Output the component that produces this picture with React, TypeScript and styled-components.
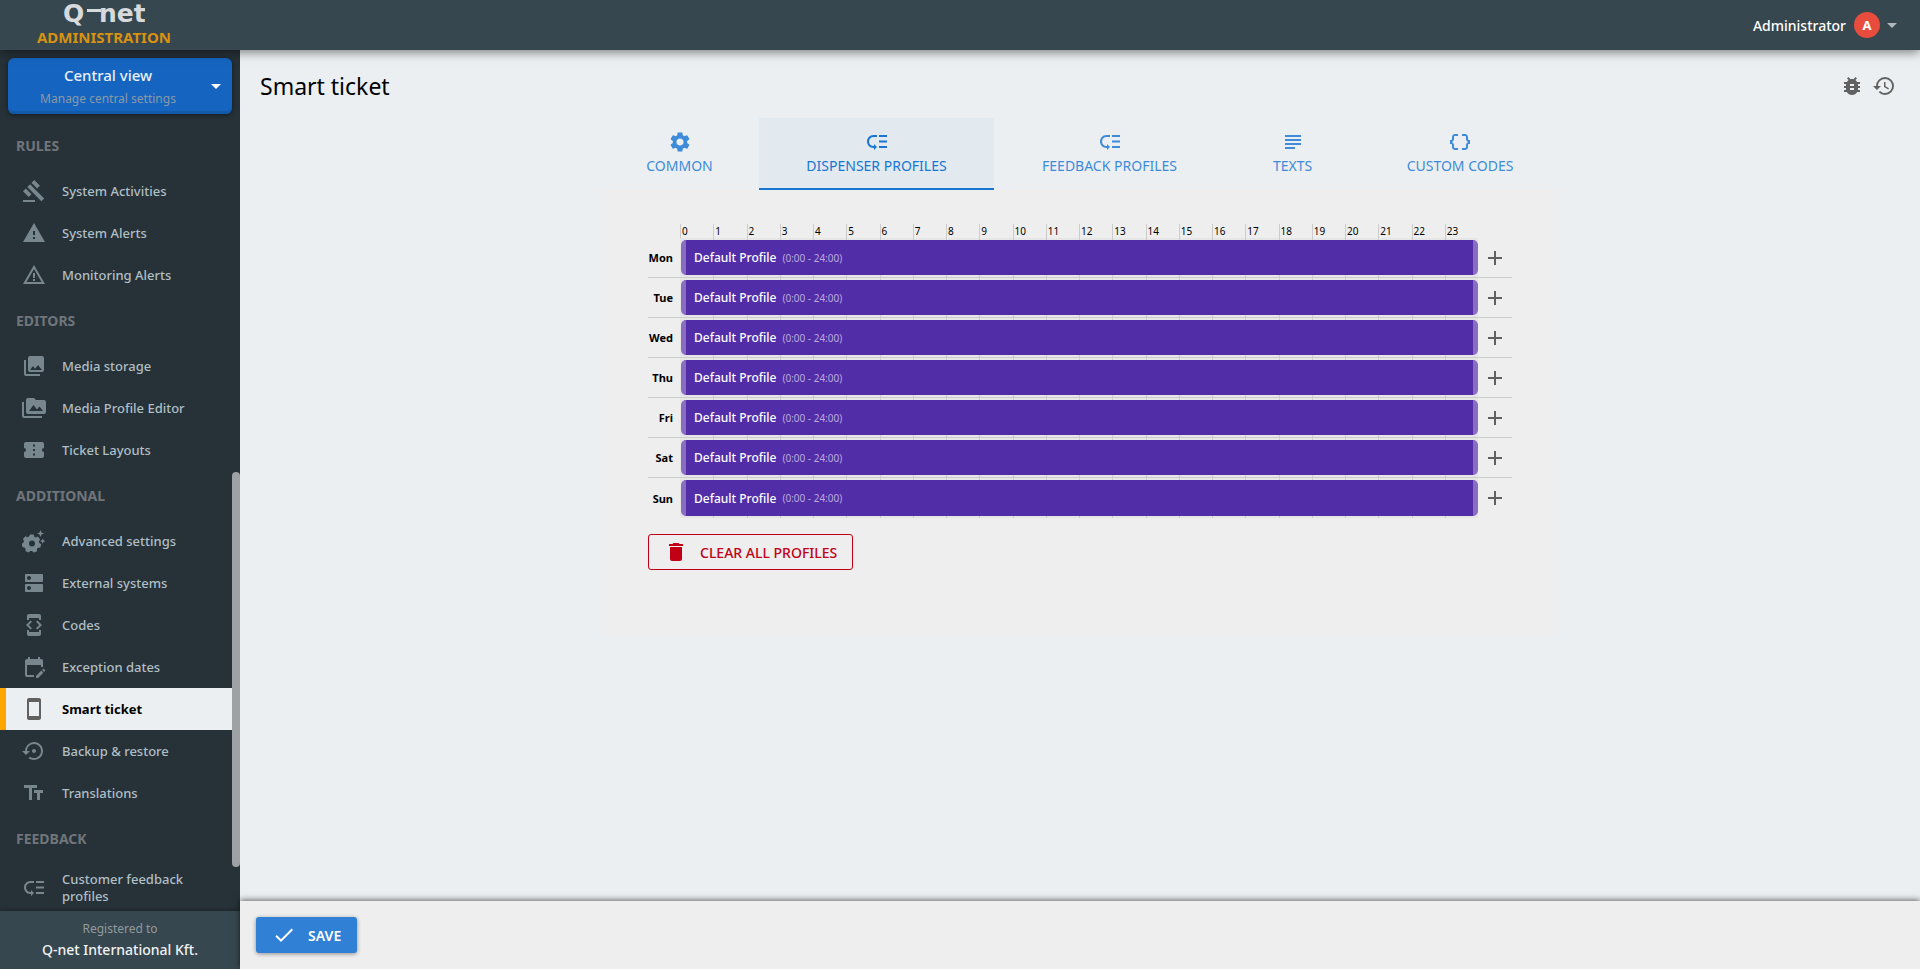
import React from "react";
import styled, { createGlobalStyle, css } from "styled-components";
import type { IconType } from "react-icons";
import {
  MdAdd,
  MdArrowDropDown,
  MdBugReport,
  MdCheck,
  MdConfirmationNumber,
  MdDataObject,
  MdDelete,
  MdDeveloperMode,
  MdDns,
  MdEditCalendar,
  MdGavel,
  MdHistory,
  MdLowPriority,
  MdSettings,
  MdSettingsBackupRestore,
  MdStayCurrentPortrait,
  MdSubject,
  MdWarning,
  MdWarningAmber,
} from "react-icons/md";

const GlobalStyle = createGlobalStyle`
  *, *::before, *::after { box-sizing: border-box; }
  body {
    margin: 0;
    background: #eceff1;
    color: #000;
    font-family: "Noto Sans", "Open Sans", sans-serif;
    font-size: 14px;
  }
  button { font-family: inherit; cursor: pointer; }
`;

const Page = styled.div`
  display: flex;
  flex-direction: column;
  height: 100vh;
  overflow: hidden;
`;

const Header = styled.header`
  flex: none;
  position: relative;
  z-index: 2;
  display: flex;
  justify-content: space-between;
  height: 50px;
  background: #37474f;
  box-shadow: 0 2px 10px rgba(0, 0, 0, 0.5);
`;

const Brand = styled.a`
  display: flex;
  flex-direction: column;
  align-items: center;
  width: 208px;
  color: #d8920f;
  font-size: 15px;
  font-weight: 700;
  line-height: 16px;
  text-decoration: none;
`;

const Logo = styled.svg`
  display: block;
  width: 82px;
  height: 29px;
  fill: #d7dadc;
  font: 700 25px "DejaVu Sans", sans-serif;
`;

const UserButton = styled.button`
  display: flex;
  align-items: center;
  padding: 0 16px 0 8px;
  border: 0;
  background: none;
  color: #fff;
  font-size: 14px;
  font-weight: 500;
`;

const Avatar = styled.span`
  display: grid;
  place-items: center;
  width: 26px;
  height: 26px;
  margin: 0 0 0 8px;
  border-radius: 50%;
  background: #e74c3c;
  font-size: 13px;
  font-weight: 700;
`;

const Caret = styled(MdArrowDropDown)`
  width: 24px;
  height: 24px;
  color: #b0b8bc;
`;

const Body = styled.div`
  flex: 1;
  display: flex;
  min-height: 0;
`;

const Sidebar = styled.aside`
  flex: none;
  display: flex;
  flex-direction: column;
  width: 240px;
  background: #263238;
`;

const ViewButton = styled.button`
  flex: none;
  display: flex;
  align-items: center;
  height: 56px;
  margin: 8px 8px 7px;
  padding: 0 4px 0 0;
  border: 0;
  border-radius: 6px;
  background: #1565c0;
  box-shadow: inset 0 -3px 0 #1259a9, 0 1px 4px rgba(0, 0, 0, 0.5);
  color: #e9eff7;
  text-align: center;
`;

const ViewText = styled.span`
  flex: 1;
  display: flex;
  flex-direction: column;
  padding: 2px 0 0 4px;
  line-height: 24px;
`;

const ViewTitle = styled.span`
  font-size: 15px;
  font-weight: 500;
`;

const ViewHint = styled.span`
  color: #8b98a5;
  font-size: 12px;
`;

const ViewCaret = styled(MdArrowDropDown)`
  width: 24px;
  height: 24px;
  color: #fff;
`;

const NavArea = styled.div`
  flex: 1;
  position: relative;
  min-height: 0;
  overflow: hidden;
`;

const ScrollThumb = styled.div`
  position: absolute;
  top: 44.4%;
  right: 0;
  width: 8px;
  height: 50%;
  border-radius: 4px;
  background: #9ea2a5;
`;

const NavHeading = styled.h2`
  margin: 0;
  padding: 14px 16px 13px;
  color: #70757b;
  font-size: 14px;
  font-weight: 700;
  line-height: 22px;
`;

const NavList = styled.ul`
  margin: 0;
  padding: 0 8px 0 0;
  list-style: none;
`;

const NavLink = styled.a<{ $active?: boolean }>`
  display: flex;
  align-items: center;
  gap: 16px;
  min-height: 42px;
  padding: 8px 8px 8px 22px;
  color: #b0bec5;
  font-size: 13px;
  font-weight: 500;
  line-height: 17px;
  text-decoration: none;

  svg {
    flex: none;
    width: 24px;
    height: 24px;
    color: #78868d;
  }

  ${(p) =>
    p.$active &&
    css`
      padding-left: 16px;
      border-left: 6px solid #ffa500;
      background: #eceff1;
      color: #000;
      font-weight: 700;

      svg {
        color: #616161;
      }
    `}
`;

const Registered = styled.footer`
  flex: none;
  position: relative;
  height: 58px;
  padding-top: 7px;
  background: #37474f;
  box-shadow: 0 -1px 4px rgba(0, 0, 0, 0.3);
  color: #f0f2f3;
  font-size: 14px;
  font-weight: 500;
  line-height: 21px;
  text-align: center;
`;

const RegisteredHint = styled.div`
  color: #919a9e;
  font-size: 12px;
  font-weight: 400;
`;

const Main = styled.main`
  flex: 1;
  display: flex;
  flex-direction: column;
  min-width: 0;
`;

const Content = styled.div`
  flex: 1;
  min-height: 0;
  overflow: hidden;
`;

const TitleBar = styled.div`
  display: flex;
  align-items: center;
  justify-content: space-between;
  height: 68px;
  padding: 3px 24px 0 20px;
`;

const Title = styled.h1`
  margin: 0;
  font-size: 23px;
  font-weight: 400;
  line-height: 32px;
`;

const Actions = styled.div`
  display: flex;
  gap: 8px;
`;

const IconButton = styled.button`
  display: grid;
  place-items: center;
  padding: 0;
  border: 0;
  background: none;
  color: #616161;

  svg {
    width: 24px;
    height: 24px;
  }
`;

const Card = styled.section`
  max-width: 960px;
  margin: 0 auto;
`;

const Tabs = styled.div`
  display: grid;
  grid-template-columns: 159fr 235fr 231fr 135fr 200fr;
`;

const Tab = styled.button<{ $active?: boolean }>`
  display: flex;
  flex-direction: column;
  align-items: center;
  height: 72px;
  padding: 12px 0 0;
  border: 0;
  border-bottom: 2px solid ${(p) => (p.$active ? "#1976d2" : "transparent")};
  background: ${(p) => (p.$active ? "#e2e9ef" : "none")};
  color: ${(p) => (p.$active ? "#1976d2" : "#3d8bd9")};
  font-size: 14px;
  line-height: 24px;
  white-space: nowrap;

  svg {
    width: 24px;
    height: 24px;
  }
`;

const Panel = styled.div`
  padding: 34px 48px 65px;
  background: #eee;
`;

const hourColumns = css`
  display: grid;
  grid-template-columns: repeat(24, minmax(0, 1fr));
`;

const Schedule = styled.div`
  margin-bottom: 16px;
`;

const HourScale = styled.div`
  ${hourColumns}
  height: 14px;
  margin: 0 34px 0 32px;
`;

const Hour = styled.span`
  padding-left: 1px;
  border-left: 1px solid #ccc;
  font-size: 10px;
  line-height: 14px;
`;

const DayRow = styled.div`
  display: grid;
  grid-template-columns: 32px minmax(0, 1fr) 34px;
  height: 40px;
  border-bottom: 1px solid #ccc;

  &:last-child {
    border-bottom: 0;
  }
`;

const DayName = styled.span`
  align-self: center;
  padding-right: 7px;
  font-size: 11px;
  font-weight: 700;
  text-align: right;
`;

const Track = styled.div`
  ${hourColumns}
  grid-template-rows: 100%;
  background: #e6e6e6;
`;

const Slot = styled.span<{ $hour: number }>`
  grid-row: 1;
  grid-column: ${(p) => p.$hour + 1};
  border-left: 1px solid ${(p) => (p.$hour === 0 ? "transparent" : "#ccc")};
`;

const Bar = styled.div`
  grid-row: 1;
  grid-column: 1 / -1;
  display: flex;
  align-items: center;
  gap: 6px;
  margin: 2px 0 2px 1px;
  padding-left: 8px;
  border: solid #8a6cc2;
  border-width: 0 5px;
  border-radius: 5px;
  background: #512da8;
  color: #fff;
  font-size: 12px;
  font-weight: 500;
`;

const BarTime = styled.span`
  color: #b9abdc;
  font-size: 10px;
  font-weight: 400;
`;

const ClearButton = styled.button`
  display: flex;
  align-items: center;
  gap: 12px;
  height: 36px;
  padding: 0 15px;
  border: 1px solid #c10015;
  border-radius: 3px;
  background: none;
  color: #c10015;
  font-size: 14px;
  font-weight: 500;

  svg {
    width: 24px;
    height: 24px;
  }
`;

const ActionBar = styled.div`
  flex: none;
  position: relative;
  height: 68px;
  padding: 16px;
  background: #eee;
  box-shadow: 0 -1px 6px rgba(0, 0, 0, 0.6);
`;

const SaveButton = styled.button`
  display: flex;
  align-items: center;
  gap: 12px;
  height: 36px;
  padding: 0 16px;
  border: 0;
  border-radius: 3px;
  background: #3081d6;
  box-shadow: 0 1px 4px rgba(0, 0, 0, 0.4);
  color: #fff;
  font-size: 14px;
  font-weight: 600;

  svg {
    width: 24px;
    height: 24px;
  }
`;

const PathIcon = ({ d }: { d: string }) => (
  <svg viewBox="0 0 24 24" fill="currentColor" aria-hidden="true">
    <path d={d} />
  </svg>
);

const SparkCogIcon = () => (
  <svg viewBox="0 0 24 24" fill="currentColor" aria-hidden="true">
    <path
      fillRule="evenodd"
      d="M8.200 5.500h3.600l.5 2.200 1.500.8 2.100-.9 2.200 2.900-1.200 1.900.4 1.700 1.900 1.100-.9 3.300-2.300.2-1.100 1.300.2 2.200-3.300 1.200-1.800-1.500-1.700 0-1.800 1.500-3-1.400 0-2.300-1.100-1.300-2-.4-.7-3.300 1.900-1.200.4-1.600-1-2 2.400-2.600 2.100.9 1.400-.8zM10 11.500a3 3 0 1 0 0 6 3 3 0 0 0 0-6z"
    />
    <path d="M18.500 1l1 2.500L22 4.500l-2.500 1-1 2.500-1-2.500-2.500-1 2.500-1zM20.700 9.400l.8 1.900 1.900.8-1.900.8-.8 1.900-.8-1.900-1.900-.8 1.900-.8z" />
  </svg>
);

const TextSizeIcon = () => <PathIcon d="M2 4v3h5v12h3V7h5V4H2zm19 5h-9v3h3v7h3v-7h3V9z" />;

const PhotoStackIcon = () => (
  <PathIcon d="M22 16V4a2 2 0 0 0-2-2H8a2 2 0 0 0-2 2v12a2 2 0 0 0 2 2h12a2 2 0 0 0 2-2M11 12l2.030 2.710L16 11l4 5H8M2 6v14a2 2 0 0 0 2 2h14v-2H4V6" />
);

const FolderStackIcon = () => (
  <PathIcon d="M7 15l4.500-6 3.500 4.510 2.500-3.010L21 15m1-11h-8l-2-2H6a2 2 0 0 0-2 2v12a2 2 0 0 0 2 2h16a2 2 0 0 0 2-2V6a2 2 0 0 0-2-2M2 6H0v14a2 2 0 0 0 2 2h18v-2H2V6z" />
);

type NavItem = { label: string; icon: IconType | (() => React.JSX.Element); active?: boolean };

const navigation: { heading: string; items: NavItem[] }[] = [
  {
    heading: "RULES",
    items: [
      { label: "System Activities", icon: MdGavel },
      { label: "System Alerts", icon: MdWarning },
      { label: "Monitoring Alerts", icon: MdWarningAmber },
    ],
  },
  {
    heading: "EDITORS",
    items: [
      { label: "Media storage", icon: PhotoStackIcon },
      { label: "Media Profile Editor", icon: FolderStackIcon },
      { label: "Ticket Layouts", icon: MdConfirmationNumber },
    ],
  },
  {
    heading: "ADDITIONAL",
    items: [
      { label: "Advanced settings", icon: SparkCogIcon },
      { label: "External systems", icon: MdDns },
      { label: "Codes", icon: MdDeveloperMode },
      { label: "Exception dates", icon: MdEditCalendar },
      { label: "Smart ticket", icon: MdStayCurrentPortrait, active: true },
      { label: "Backup & restore", icon: MdSettingsBackupRestore },
      { label: "Translations", icon: TextSizeIcon },
    ],
  },
  {
    heading: "FEEDBACK",
    items: [{ label: "Customer feedback profiles", icon: MdLowPriority }],
  },
];

const tabs: { label: string; icon: IconType; active?: boolean }[] = [
  { label: "COMMON", icon: MdSettings },
  { label: "DISPENSER PROFILES", icon: MdLowPriority, active: true },
  { label: "FEEDBACK PROFILES", icon: MdLowPriority },
  { label: "TEXTS", icon: MdSubject },
  { label: "CUSTOM CODES", icon: MdDataObject },
];

const days = ["Mon", "Tue", "Wed", "Thu", "Fri", "Sat", "Sun"];
const hours = Array.from({ length: 24 }, (_, hour) => hour);

export default function App() {
  return (
    <Page>
      <GlobalStyle />
      <Header>
        <Brand href="#">
          <Logo viewBox="0 0 82 29">
            <text x="0" y="22">Q</text>
            <rect x="24" y="9" width="14" height="3" />
            <text x="36" y="22">net</text>
          </Logo>
          ADMINISTRATION
        </Brand>
        <UserButton>
          Administrator
          <Avatar>A</Avatar>
          <Caret />
        </UserButton>
      </Header>
      <Body>
        <Sidebar>
          <ViewButton>
            <ViewText>
              <ViewTitle>Central view</ViewTitle>
              <ViewHint>Manage central settings</ViewHint>
            </ViewText>
            <ViewCaret />
          </ViewButton>
          <NavArea>
            <nav>
              {navigation.map((group) => (
                <section key={group.heading}>
                  <NavHeading>{group.heading}</NavHeading>
                  <NavList>
                    {group.items.map(({ label, icon: Icon, active }) => (
                      <li key={label}>
                        <NavLink href="#" $active={active}>
                          <Icon />
                          {label}
                        </NavLink>
                      </li>
                    ))}
                  </NavList>
                </section>
              ))}
            </nav>
            <ScrollThumb />
          </NavArea>
          <Registered>
            <RegisteredHint>Registered to</RegisteredHint>
            Q-net International Kft.
          </Registered>
        </Sidebar>
        <Main>
          <Content>
            <TitleBar>
              <Title>Smart ticket</Title>
              <Actions>
                <IconButton aria-label="Report a bug">
                  <MdBugReport />
                </IconButton>
                <IconButton aria-label="History">
                  <MdHistory />
                </IconButton>
              </Actions>
            </TitleBar>
            <Card>
              <Tabs role="tablist">
                {tabs.map(({ label, icon: Icon, active }) => (
                  <Tab key={label} role="tab" aria-selected={!!active} $active={active}>
                    <Icon />
                    {label}
                  </Tab>
                ))}
              </Tabs>
              <Panel role="tabpanel">
                <Schedule>
                  <HourScale>
                    {hours.map((hour) => (
                      <Hour key={hour}>{hour}</Hour>
                    ))}
                  </HourScale>
                  {days.map((day) => (
                    <DayRow key={day}>
                      <DayName>{day}</DayName>
                      <Track>
                        {hours.map((hour) => (
                          <Slot key={hour} $hour={hour} />
                        ))}
                        <Bar>
                          Default Profile <BarTime>(0:00 - 24:00)</BarTime>
                        </Bar>
                      </Track>
                      <IconButton aria-label={`Add profile on ${day}`}>
                        <MdAdd />
                      </IconButton>
                    </DayRow>
                  ))}
                </Schedule>
                <ClearButton>
                  <MdDelete />
                  CLEAR ALL PROFILES
                </ClearButton>
              </Panel>
            </Card>
          </Content>
          <ActionBar>
            <SaveButton>
              <MdCheck />
              SAVE
            </SaveButton>
          </ActionBar>
        </Main>
      </Body>
    </Page>
  );
}
